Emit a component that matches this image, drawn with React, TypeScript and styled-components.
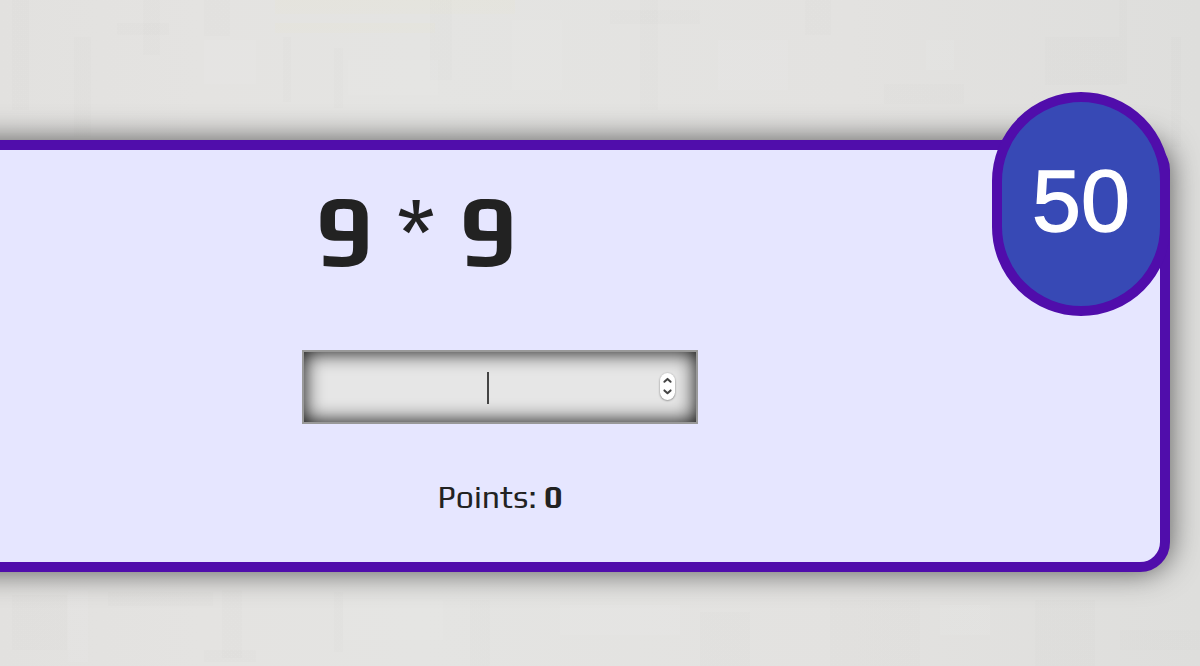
import React from "react";
import styled, { createGlobalStyle } from "styled-components";

const GlobalStyle = createGlobalStyle`
  * { box-sizing: border-box; }
  html, body { margin: 0; height: 100%; overflow: hidden; }
`;

const dark = "linear-gradient(rgba(70,70,66,.012), rgba(70,70,66,.012))";
const light = "linear-gradient(rgba(255,255,255,.05), rgba(255,255,255,.05))";
const warm = "linear-gradient(rgba(232,228,196,.14), rgba(232,228,196,.1))";

/* Faint woven-paper patches: [fill, x, y, width, height] */
const weave: [string, number, number, number, number][] = [
  [dark, 12, 0, 17, 110], [dark, 74, 37, 17, 100], [dark, 117, 23, 52, 12],
  [dark, 143, 0, 17, 55], [dark, 204, 0, 26, 36], [light, 204, 40, 52, 44],
  [warm, 275, 0, 240, 14], [warm, 275, 23, 160, 10], [dark, 283, 37, 8, 65],
  [dark, 334, 48, 9, 60], [light, 348, 60, 90, 35], [dark, 430, 0, 22, 80],
  [light, 512, 20, 50, 70], [dark, 610, 10, 90, 14], [dark, 640, 0, 18, 110],
  [light, 718, 40, 70, 50], [dark, 805, 0, 26, 35], [light, 926, 40, 28, 30],
  [dark, 884, 84, 80, 20], [dark, 1045, 37, 74, 48], [dark, 1119, 0, 8, 84],
  [dark, 1171, 37, 10, 110], [dark, 12, 595, 55, 55], [light, 68, 590, 20, 72],
  [dark, 108, 592, 105, 14], [dark, 222, 590, 20, 68], [dark, 334, 592, 9, 60],
  [light, 343, 600, 100, 40], [dark, 204, 650, 52, 12], [dark, 470, 600, 20, 66],
  [light, 560, 605, 120, 30], [dark, 700, 612, 50, 54], [dark, 830, 600, 90, 66],
  [light, 940, 605, 50, 30], [dark, 1035, 600, 60, 66], [dark, 1120, 630, 80, 20],
];

const Page = styled.main`
  height: 666px;
  padding-top: 140px;
  overflow: hidden;
  color: #222;
  font-family: Play, Roboto, sans-serif;
  background:
    ${weave.map(([fill, x, y, w, h]) => `${fill} ${x}px ${y}px / ${w}px ${h}px no-repeat`).join(", ")},
    linear-gradient(90deg, #e2e1df 0, #e4e3e1 200px, #e4e4e2 420px, #e3e2e0 850px, #dededc 1200px);
`;

const Card = styled.section`
  position: relative;
  display: flex;
  flex-direction: column;
  align-items: center;
  width: 1340px;
  height: 432px;
  margin-left: -170px;
  border: 10px solid #500dab;
  border-radius: 30px;
  background: #e6e6ff;
  box-shadow: 0 0 30px #555;
`;

const Equation = styled.h1`
  width: 396px;
  height: 168px;
  margin: 0 0 32px;
  padding: 22px 0 0 13px;
  font-size: 100px;
  line-height: 116px;
  font-weight: 400;
  white-space: pre;
`;

const Answer = styled.div`
  display: flex;
  align-items: center;
  justify-content: space-between;
  width: 396px;
  height: 74px;
  padding: 0 21.5px 0 183px;
  border: 2px solid #999;
  background: #e6e6e6;
  box-shadow: inset 0 0 20px #000;
`;

const Caret = styled.span`
  width: 2px;
  height: 32px;
  margin-top: 2px;
  background: #444;
`;

const Stepper = styled.span`
  display: flex;
  width: 15px;
  height: 27px;
  margin-top: -2px;
  border-radius: 8px;
  background: #fff;
  box-shadow: 0 0.5px 2px rgba(0, 0, 0, 0.5);
`;

const Points = styled.p`
  margin: 53px 0 0;
  font-size: 32px;
  line-height: 40px;
  white-space: pre;
`;

const Timer = styled.div`
  position: absolute;
  top: -58px;
  right: -10px;
  display: flex;
  align-items: center;
  justify-content: center;
  width: 178px;
  height: 224px;
  padding-bottom: 6px;
  border: 10px solid #500dab;
  border-radius: 100px;
  background: #3749b5;
  color: #fff;
  font: 88px/100px "Liberation Sans", Arial, sans-serif;
  -webkit-text-stroke: 1.4px #fff;
`;

export default function App() {
  return (
    <Page>
      <GlobalStyle />
      <Card>
        <Equation><strong>9</strong> * <strong>9</strong></Equation>
        <Answer>
          <Caret />
          <Stepper>
            <svg width="15" height="27" viewBox="0 0 15 27" fill="none" stroke="#444" strokeWidth="2" strokeLinecap="round" strokeLinejoin="round">
              <path d="M4.4 8.8 7.5 5.9l3.1 2.9M4.4 17.4l3.1 2.9 3.1-2.9" />
            </svg>
          </Stepper>
        </Answer>
        <Points>Points: <strong>0</strong></Points>
        <Timer>50</Timer>
      </Card>
    </Page>
  );
}
